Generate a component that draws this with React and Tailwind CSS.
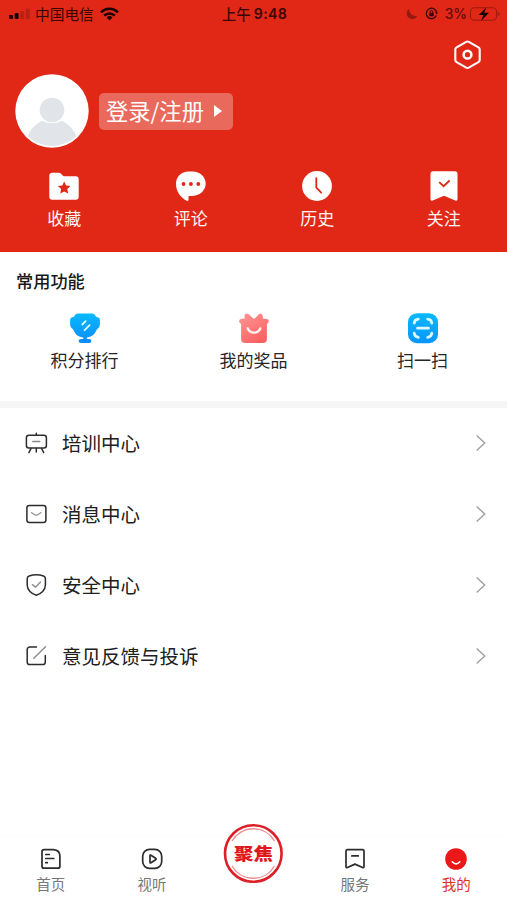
import React from "react";

const RED = "#e12817";

function StatusBar() {
  return (
    <div className="flex h-[27px] items-center justify-between pl-[9px] pr-[6px] text-[#3a0603]">
      <div className="flex w-[150px] items-center">
        <svg width="21" height="12" viewBox="0 0 21 12" className="mt-px">
          <rect x="0" y="7" width="4" height="4" rx="1" fill="#1c0302" />
          <rect x="5.6" y="5" width="4" height="6" rx="1" fill="#1c0302" />
          <rect x="11.2" y="3" width="4" height="8" rx="1" fill="#b82114" />
          <rect x="16.8" y="0.5" width="4" height="10.5" rx="1" fill="#b82114" />
        </svg>
        <span className="ml-[5px] whitespace-nowrap text-[14.7px] leading-5">中国电信</span>
        <svg width="19" height="14" viewBox="0 0 19 14" className="ml-[6px]" fill="none" stroke="#1c0302" strokeWidth="2.5">
          <path d="M1 5.3a12.2 12.2 0 0 1 17 0" />
          <path d="M4.2 8.6a7.6 7.6 0 0 1 10.6 0" />
          <path d="M9.5 13.4 6.6 10.5a4.2 4.2 0 0 1 5.8 0Z" fill="#1c0302" stroke="none" />
        </svg>
      </div>
      <div className="-ml-px flex items-center whitespace-nowrap font-medium leading-5">
        <span className="text-[14.5px]">上午</span>
        <span className="ml-[3px] font-['Inter'] text-[14.2px] font-semibold tracking-[0.3px]">9:48</span>
      </div>
      <div className="flex w-[150px] items-center justify-end pr-px">
        <svg width="12" height="12" viewBox="0 0 12 12" className="mr-[7px]">
          <path d="M3.2.8C2.700 5.300 6.500 8.800 11.400 7.800A5.600 5.600 0 1 1 3.200.8Z" fill="#941a10" />
        </svg>
        <svg width="13" height="13" viewBox="0 0 13 13" className="mr-[7px]" fill="none" stroke="#3a0603">
          <path d="M11.300 8.500A5.200 5.200 0 1 1 11.700 6" strokeWidth="1.300" />
          <path d="M10.200 5.400h2.800l-1.300 2.100Z" fill="#3a0603" stroke="none" />
          <rect x="4.300" y="5.700" width="4.400" height="3.600" rx=".5" fill="#3a0603" stroke="none" />
          <path d="M5.200 6V4.800a1.300 1.300 0 0 1 2.600 0V6" />
        </svg>
        <span className="font-['Inter'] text-[13.8px] font-medium leading-5 text-[#5c0c06]">3%</span>
        <svg width="31" height="16" viewBox="0 0 31 16" className="ml-[2px]">
          <rect x="1.500" y="1.700" width="26" height="12.600" rx="3.800" fill="none" stroke="#9c1b10" strokeWidth="1.100" />
          <path d="M28.700 5.800v4.400q1.900-.6 1.900-2.200t-1.900-2.200Z" fill="#9c1b10" />
          <path d="M17.400 1.200 9.800 9h4.600L12 15l8-8.200h-4.900Z" fill="#140101" />
        </svg>
      </div>
    </div>
  );
}

function FolderIcon() {
  return (
    <svg width="32" height="32" viewBox="0 0 32 32">
      <path d="M1.300 5.800a3 3 0 0 1 3-3h6.500q1.200 0 2 .8l2.200 2.100q.7.600 1.700.6h11a3 3 0 0 1 3 3V26.700a3 3 0 0 1-3 3H4.300a3 3 0 0 1-3-3Z" fill="#fff" />
      <path d="m16.200 11.500 1.900 4 4.400.6-3.200 3 .8 4.400-3.900-2.100-3.900 2.100.8-4.400-3.200-3 4.400-.6Z" fill={RED} />
    </svg>
  );
}

function CommentIcon() {
  return (
    <svg width="32" height="32" viewBox="0 0 32 32">
      <path d="M13.500 1.500h4C25 1.500 30.700 6.900 30.700 13.600S25 25.900 17.700 25.900h-3.500q-.7 0-.7.800V29.600q0 1.900-1.800 1.100C5.500 27.800 1 21.500 1 13.800 1 6.900 6.400 1.500 13.500 1.500Z" fill="#fff" />
      <g fill={RED}>
        <circle cx="8.500" cy="14" r="1.900" />
        <circle cx="15.900" cy="14" r="1.900" />
        <circle cx="23.300" cy="14" r="1.900" />
      </g>
    </svg>
  );
}

function ClockIcon() {
  return (
    <svg width="32" height="32" viewBox="0 0 32 32">
      <circle cx="16" cy="16" r="14.900" fill="#fff" />
      <path d="M15.300 8.200V17.700l4.900 5" fill="none" stroke={RED} strokeWidth="1.800" strokeLinecap="round" />
    </svg>
  );
}

function FollowIcon() {
  return (
    <svg width="32" height="32" viewBox="0 0 32 32">
      <path d="M5 1.300h22a2.500 2.500 0 0 1 2.500 2.500V29q0 2.400-2.200 1.500L16 25.800 4.700 30.500q-2.200.9-2.200-1.500V3.800A2.500 2.500 0 0 1 5 1.300Z" fill="#fff" />
      <path d="m11.200 12.100 4.400 4.100 6-5.700" fill="none" stroke={RED} strokeWidth="1.800" />
    </svg>
  );
}

function TrophyIcon() {
  return (
    <svg width="32" height="32" viewBox="0 0 32 32">
      <defs>
        <linearGradient id="cup" x1="0" y1="0" x2="0" y2="1">
          <stop offset="0" stopColor="#08b9fd" />
          <stop offset="1" stopColor="#098cfb" />
        </linearGradient>
      </defs>
      <path d="M9 1.500h14q2.500 0 4 3.300l1 .3q2.900.5 2.900 3.200v4.200q0 3-2.300 4.200-.7.400-1.100 1.500C25.500 22.800 22 25 17.800 25.400v1.500h2.300q2.300 0 2.300 2.100t-2.300 2.100h-8.200q-2.300 0-2.300-2.100t2.300-2.100h2.300v-1.500C10 25 6.500 22.800 4.500 18.200q-.4-1.100-1.100-1.500-2.300-1.200-2.300-4.200v-4.200q0-2.700 2.900-3.200l1-.3q1.500-3.300 4-3.300Z" fill="url(#cup)" />
      <path d="m13.300 12.500 3.300-3.300M15.600 18.200l5-5" stroke="#d9faff" strokeWidth="1.900" strokeLinecap="round" />
    </svg>
  );
}

function PrizeIcon() {
  return (
    <svg width="32" height="32" viewBox="0 0 32 32">
      <defs>
        <linearGradient id="gift" x1="0" y1="0" x2="0.600" y2="1">
          <stop offset="0" stopColor="#ff9797" />
          <stop offset="1" stopColor="#fb6262" />
        </linearGradient>
      </defs>
      <path d="M6.700 6.500 6.400 4Q6.400 1.500 8.900 1.500q1 0 1.800.8L14.800 6q1.200 1 2.400 0L20.900 2.200q1.500-1.300 2.900 0 1.200 1.200 1.100 2.500l-.1 1.800 4.100.4q2 .3 1.900 2.400-.2 1.800-1.900 2.500V27q0 4-4 4H7.100q-4 0-4-4V11.800Q1.100 11.100 1.100 9.200q0-2.300 2.600-2.400Z" fill="url(#gift)" />
      <path d="M9.600 16.300a6.900 6.900 0 0 0 12.800 0" fill="none" stroke="#fff2ef" strokeWidth="2.300" strokeLinecap="round" />
    </svg>
  );
}

function ScanIcon() {
  return (
    <svg width="32" height="32" viewBox="0 0 32 32">
      <defs>
        <linearGradient id="scan" x1="0" y1="0" x2="0" y2="1">
          <stop offset="0" stopColor="#08b9fd" />
          <stop offset="1" stopColor="#0896fb" />
        </linearGradient>
      </defs>
      <rect x="1" y="1.200" width="30" height="30" rx="9" fill="url(#scan)" />
      <path d="M7.200 11.200q.4-3.700 4.100-4.100M20.700 7.100q3.700.4 4.100 4.100M7.200 21.200q.4 3.700 4.100 4.100M20.700 25.300q3.700-.4 4.100-4.100M10.500 16.200h11" fill="none" stroke="#dcf8ff" strokeWidth="2.800" strokeLinecap="round" />
    </svg>
  );
}

function LineIcon({ children }) {
  return (
    <svg width="24" height="24" viewBox="0 0 24 24" fill="none" stroke="#2c2c2c" strokeWidth="1.500" strokeLinecap="round" strokeLinejoin="round">
      {children}
    </svg>
  );
}

const BoardIcon = () => (
  <LineIcon>
    <rect x="2.400" y="4.300" width="20" height="12.600" rx="2.500" />
    <path d="M12.300 2.200v2M7 17.500l-2.100 4.100M17.600 17.500l2.100 4.100M12.300 17.500v3.600" />
    <path d="M8.800 10.600h7" stroke="#8a8a8a" />
  </LineIcon>
);
const MessageIcon = () => (
  <LineIcon>
    <rect x="2.900" y="3.500" width="19" height="17" rx="2.500" />
    <path d="m7.500 10.700 3.300 2q1.400.9 2.800 0l3.300-2" stroke="#929292" strokeWidth="1.300" />
  </LineIcon>
);
const ShieldIcon = () => (
  <LineIcon>
    <path d="M5.100 3Q12.300.7 19.500 3q1.900.6 1.900 2.500V12c0 5-4.300 8.800-9.100 10.200C7.500 20.800 3.200 17 3.200 12V5.500Q3.200 3.600 5.100 3Z" />
    <path d="m8.500 11.700 3 2.500 5-5.200" stroke="#929292" />
  </LineIcon>
);
const FeedbackIcon = () => (
  <LineIcon>
    <path d="M12.500 2.900H5.800a2.600 2.600 0 0 0-2.600 2.600V18a2.600 2.600 0 0 0 2.600 2.600h12.900A2.600 2.600 0 0 0 21.300 18v-6.500" />
    <path d="M9.800 14.300 21.500 2.800" stroke="#8f8f8f" />
  </LineIcon>
);

const HomeIcon = () => (
  <LineIcon>
    <path d="M5 2.700h9.600q6.300.5 6.300 6.500v10q0 2-2 2H5q-2 0-2-2V4.700q0-2 2-2Z" strokeWidth="1.700" />
    <path d="M6.800 7.500h3.500M6.800 11.500h8M6.800 15.700h1.500" strokeWidth="1.700" />
  </LineIcon>
);
const VideoIcon = () => (
  <LineIcon>
    <rect x="2.700" y="2.400" width="19" height="19" rx="6.800" strokeWidth="1.700" />
    <path d="M10 8.700v6.600q0 1 1 .5l4.600-3q1-.8 0-1.600l-4.600-3q-1-.5-1 .5Z" strokeWidth="1.700" />
  </LineIcon>
);
const ServiceIcon = () => (
  <LineIcon>
    <path d="M4.500 2.600h15q1.500 0 1.500 1.500v15.500q0 1.600-1.400.9L12 17.100l-7.600 3.400q-1.400.7-1.400-.9V4.100q0-1.500 1.500-1.500Z" strokeWidth="1.700" />
    <path d="M8.800 8.900h6.500" strokeWidth="1.700" />
  </LineIcon>
);
const MineIcon = () => (
  <svg width="24" height="24" viewBox="0 0 24 24">
    <circle cx="12" cy="12" r="10.800" fill="#ea1818" />
    <path d="M8.300 14.800q3.700 4.300 7.500 0" fill="none" stroke="#fff" strokeWidth="1.700" strokeLinecap="round" />
  </svg>
);

const shortcuts = [
  ["收藏", FolderIcon],
  ["评论", CommentIcon],
  ["历史", ClockIcon],
  ["关注", FollowIcon],
];
const features = [
  ["积分排行", TrophyIcon],
  ["我的奖品", PrizeIcon],
  ["扫一扫", ScanIcon],
];
const rows = [
  ["培训中心", BoardIcon],
  ["消息中心", MessageIcon],
  ["安全中心", ShieldIcon],
  ["意见反馈与投诉", FeedbackIcon],
];

function Tab({ label, Icon, active }) {
  return (
    <div className="flex flex-col items-center pt-[11px]">
      <Icon />
      <span className={`mt-[3px] text-[14.5px] leading-5 ${active ? "text-[#dd3027]" : "text-[#777]"}`}>{label}</span>
    </div>
  );
}

export default function App() {
  return (
    <div className="flex h-[900px] w-[507px] flex-col overflow-hidden bg-white font-['Noto_Sans_CJK_SC',sans-serif]">
      <header className="h-[252px] shrink-0 bg-[#e12817]">
        <StatusBar />
        <div className="flex h-[47px] justify-end pr-[25px] pt-[13px]">
          <svg width="29" height="30" viewBox="0 0 29 30" fill="none" stroke="#fff">
            <path d="M13.200 1.900q1.300-.7 2.600 0l9.600 5.500q1.300.7 1.300 2.200v10.300q0 1.500-1.300 2.200l-9.600 5.500q-1.300.7-2.600 0l-9.600-5.500q-1.300-.7-1.300-2.200V9.600q0-1.500 1.300-2.200Z" strokeWidth="2.100" />
            <circle cx="14.500" cy="14.700" r="3.900" strokeWidth="2.500" />
          </svg>
        </div>
        <div className="flex h-[74px] items-center pl-[15px]">
          <svg width="74" height="74" viewBox="0 0 74 74">
            <defs>
              <clipPath id="avatar">
                <circle cx="37" cy="37" r="35" />
              </clipPath>
            </defs>
            <circle cx="37" cy="37" r="36.700" fill="#fff" />
            <g fill="#e1e4e8" clipPath="url(#avatar)">
              <circle cx="37" cy="36" r="12.300" />
              <path d="M11 65q5-13 16-18.300 10 5 20 0Q58 52 63 65v9H11Z" />
            </g>
          </svg>
          <div className="ml-[10px] flex h-[37px] w-[134px] items-center rounded-[5px] bg-[#e9695d] pl-[7px] text-white">
            <span className="mb-[2px] whitespace-nowrap text-[22.300px] leading-8">登录/注册</span>
            <svg width="9" height="12" viewBox="0 0 9 12" className="ml-[10px]">
              <path d="M0 0 8 6 0 12Z" fill="#fff" />
            </svg>
          </div>
        </div>
        <div className="grid grid-cols-4 pl-px pt-[22px]">
          {shortcuts.map(([label, Icon]) => (
            <div key={label} className="flex flex-col items-center">
              <Icon />
              <span className="mt-[4px] text-[17px] leading-6 text-[#fff4f2]">{label}</span>
            </div>
          ))}
        </div>
      </header>

      <section className="h-[149px] shrink-0 pt-[17px]">
        <h2 className="pl-4 text-[17.2px] font-medium leading-6 text-[#181818]">常用功能</h2>
        <div className="mt-[19px] grid grid-cols-3">
          {features.map(([label, Icon]) => (
            <div key={label} className="flex flex-col items-center">
              <Icon />
              <span className="mt-[4px] text-[17px] leading-6 text-[#252525]">{label}</span>
            </div>
          ))}
        </div>
      </section>

      <div className="h-[7px] shrink-0 bg-[#f5f5f5]" />

      <main className="-mt-px flex-1">
        {rows.map(([label, Icon]) => (
          <div key={label} className="flex h-[71px] items-center pl-6 pr-[20px]">
            <Icon />
            <span className="ml-[14px] flex-1 text-[19.500px] leading-7 text-[#202020]">{label}</span>
            <svg width="12" height="18" viewBox="0 0 12 18" fill="none" stroke="#a3a3a3" strokeWidth="1.500">
              <path d="m1.700 1.500 8 7.500-8 7.500" />
            </svg>
          </div>
        ))}
      </main>

      <nav className="grid h-[65px] shrink-0 grid-cols-5 border-t border-[#fcfcfc]">
        <Tab label="首页" Icon={HomeIcon} />
        <Tab label="视听" Icon={VideoIcon} />
        <div className="-mt-[13px] flex justify-center">
          <div className="relative h-[60px] w-[60px]">
            <svg width="60" height="60" viewBox="0 0 60 60" fill="none">
              <circle cx="30.300" cy="30.500" r="28.300" fill="#fff" stroke="#dc2028" strokeWidth="2.600" />
              <path d="M9 18a24.500 24.500 0 0 1 42.500 0M9 43a24.500 24.500 0 0 0 42.500 0" stroke="#ef8d8f" strokeWidth="1.400" />
            </svg>
            <span className="absolute inset-0 flex scale-y-[0.88] items-center justify-center whitespace-nowrap text-[19.500px] font-black leading-none text-[#df1820]">聚焦</span>
          </div>
        </div>
        <Tab label="服务" Icon={ServiceIcon} />
        <Tab label="我的" Icon={MineIcon} active />
      </nav>
    </div>
  );
}
